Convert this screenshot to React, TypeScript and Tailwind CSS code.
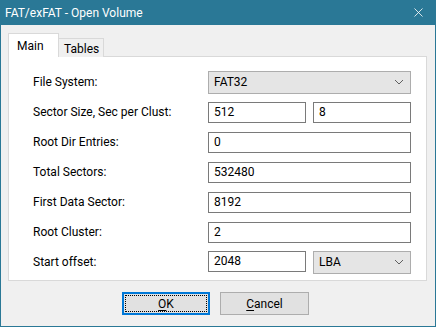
import { X } from "lucide-react";

const FONT = "font-['Segoe_UI',Roboto,sans-serif]";

function Chevron() {
  return (
    <svg width="10" height="6" viewBox="0 0 10 6" className="shrink-0">
      <path d="M1 1 L5 5 L9 1" fill="none" stroke="#606060" strokeWidth="1" />
    </svg>
  );
}

function Combo({ value, className }: { value: string; className: string }) {
  return (
    <div
      className={`h-[23px] flex items-center justify-between pl-[5px] pr-[6px] bg-[#e5e5e5] border border-[#adadad] text-black ${className}`}
    >
      <span>{value}</span>
      <Chevron />
    </div>
  );
}

function Field({ value, className }: { value: string; className: string }) {
  return (
    <div className={`h-[21px] flex items-center pl-[5px] bg-white border border-[#7a7a7a] text-black ${className}`}>
      {value}
    </div>
  );
}

const ROWS: { label: string; right: React.ReactNode }[] = [
  { label: "File System:", right: <Combo value="FAT32" className="w-[203px]" /> },
  {
    label: "Sector Size, Sec per Clust:",
    right: (
      <div className="flex gap-[7px]">
        <Field value="512" className="w-[98px]" />
        <Field value="8" className="w-[98px]" />
      </div>
    ),
  },
  { label: "Root Dir Entries:", right: <Field value="0" className="w-[203px]" /> },
  { label: "Total Sectors:", right: <Field value="532480" className="w-[203px]" /> },
  { label: "First Data Sector:", right: <Field value="8192" className="w-[203px]" /> },
  { label: "Root Cluster:", right: <Field value="2" className="w-[203px]" /> },
  {
    label: "Start offset:",
    right: (
      <div className="flex gap-[7px]">
        <Field value="2048" className="w-[98px]" />
        <Combo value="LBA" className="w-[98px]" />
      </div>
    ),
  },
];

export default function App() {
  return (
    <div className={`w-[436px] h-[327px] flex flex-col bg-[#f0f0f0] border-x border-b border-[#2a7896] text-[12px] ${FONT}`}>
      {/* Title bar */}
      <div className="h-[25px] -mx-px flex items-center justify-between bg-[#2a7896] text-white pl-[5px] pr-[10px]">
        <span>FAT/exFAT - Open Volume</span>
        <X size={15} strokeWidth={1.3} />
      </div>

      {/* Tabs */}
      <div className="pl-[7px] pr-[8px] mt-[8px]">
        <div className="flex items-end h-[24px]">
          <div className="relative z-10 h-[24px] w-[51px] bg-white border border-b-0 border-[#d9d9d9] pl-[8px] pt-[3px] text-black">
            Main
          </div>
          <div className="h-[19px] w-[45px] bg-[#f0f0f0] border border-l-0 border-b-0 border-[#d9d9d9] pl-[5px] pt-[1px] text-black">
            Tables
          </div>
        </div>

        {/* Panel */}
        <div className="h-[225px] -mt-px bg-white border border-[#d9d9d9] pl-[24px] pt-[10px]">
          {ROWS.map((row) => (
            <div key={row.label} className="h-[30px] flex items-center">
              <span className="w-[175px] text-black">{row.label}</span>
              {row.right}
            </div>
          ))}
        </div>
      </div>

      {/* Buttons */}
      <div className="flex gap-[10px] pl-[121px] mt-[11px]">
        <button className="w-[88px] h-[23px] bg-[#e1e1e1] border-2 border-[#0078d7] p-px text-black">
          <span className="flex items-center justify-center w-full h-full border border-dotted border-black">
            <span className="underline underline-offset-2">O</span>K
          </span>
        </button>
        <button className="w-[89px] h-[23px] bg-[#e1e1e1] border border-[#adadad] text-black">
          <span className="underline underline-offset-2">C</span>ancel
        </button>
      </div>
    </div>
  );
}
